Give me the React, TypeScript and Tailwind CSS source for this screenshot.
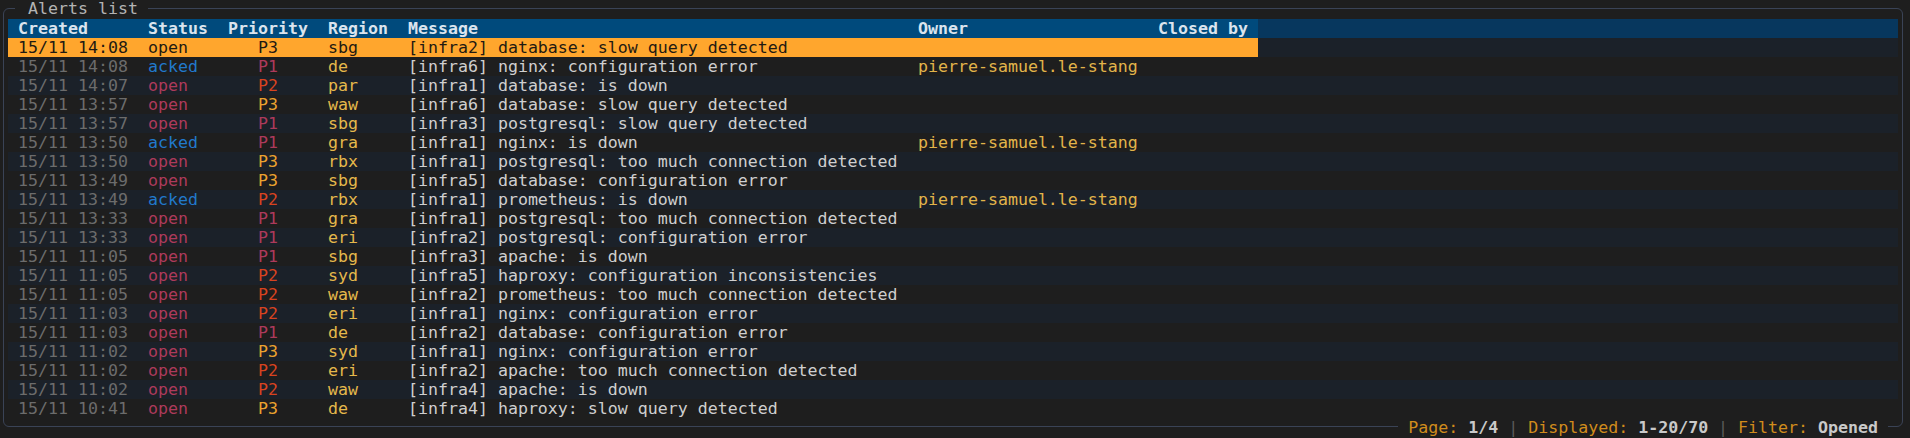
import React from "react";

type Row = {
  created: string;
  status: "open" | "acked";
  priority: "P1" | "P2" | "P3";
  region: string;
  message: string;
  owner?: string;
};

const rows: Row[] = [
  { created: "15/11 14:08", status: "open", priority: "P3", region: "sbg", message: "[infra2] database: slow query detected" },
  { created: "15/11 14:08", status: "acked", priority: "P1", region: "de", message: "[infra6] nginx: configuration error", owner: "pierre-samuel.le-stang" },
  { created: "15/11 14:07", status: "open", priority: "P2", region: "par", message: "[infra1] database: is down" },
  { created: "15/11 13:57", status: "open", priority: "P3", region: "waw", message: "[infra6] database: slow query detected" },
  { created: "15/11 13:57", status: "open", priority: "P1", region: "sbg", message: "[infra3] postgresql: slow query detected" },
  { created: "15/11 13:50", status: "acked", priority: "P1", region: "gra", message: "[infra1] nginx: is down", owner: "pierre-samuel.le-stang" },
  { created: "15/11 13:50", status: "open", priority: "P3", region: "rbx", message: "[infra1] postgresql: too much connection detected" },
  { created: "15/11 13:49", status: "open", priority: "P3", region: "sbg", message: "[infra5] database: configuration error" },
  { created: "15/11 13:49", status: "acked", priority: "P2", region: "rbx", message: "[infra1] prometheus: is down", owner: "pierre-samuel.le-stang" },
  { created: "15/11 13:33", status: "open", priority: "P1", region: "gra", message: "[infra1] postgresql: too much connection detected" },
  { created: "15/11 13:33", status: "open", priority: "P1", region: "eri", message: "[infra2] postgresql: configuration error" },
  { created: "15/11 11:05", status: "open", priority: "P1", region: "sbg", message: "[infra3] apache: is down" },
  { created: "15/11 11:05", status: "open", priority: "P2", region: "syd", message: "[infra5] haproxy: configuration inconsistencies" },
  { created: "15/11 11:05", status: "open", priority: "P2", region: "waw", message: "[infra2] prometheus: too much connection detected" },
  { created: "15/11 11:03", status: "open", priority: "P2", region: "eri", message: "[infra1] nginx: configuration error" },
  { created: "15/11 11:03", status: "open", priority: "P1", region: "de", message: "[infra2] database: configuration error" },
  { created: "15/11 11:02", status: "open", priority: "P3", region: "syd", message: "[infra1] nginx: configuration error" },
  { created: "15/11 11:02", status: "open", priority: "P2", region: "eri", message: "[infra2] apache: too much connection detected" },
  { created: "15/11 11:02", status: "open", priority: "P2", region: "waw", message: "[infra4] apache: is down" },
  { created: "15/11 10:41", status: "open", priority: "P3", region: "de", message: "[infra4] haproxy: slow query detected" },
];

const statusColor: Record<string, string> = {
  open: "text-[#ad3a5b]",
  acked: "text-[#2179cc]",
};

const prioColor: Record<string, string> = {
  P1: "text-[#ad3a5b]",
  P2: "text-[#d8431f]",
  P3: "text-[#eba22f]",
};

function DataRow({ row, index }: { row: Row; index: number }) {
  const selected = index === 0;
  const stripe = index % 2 === 0 ? "bg-[#1b2129]" : "bg-[#1e1e1e]";
  return (
    <div className={`flex h-[19px] w-[1890px] ${stripe}`}>
      <div className={`flex h-[19px] w-[1250px] ${selected ? "bg-[#ffa62d] text-[#1f1a12]" : ""}`}>
        <div className="w-[10px]" />
        <div className={`w-[130px] ${selected ? "" : "text-[#6c6c6c]"}`}>{row.created}</div>
        <div className={`w-[80px] ${selected ? "" : statusColor[row.status]}`}>{row.status}</div>
        <div className="w-[100px]">
          <div className={`w-[80px] text-center ${selected ? "" : prioColor[row.priority]}`}>{row.priority}</div>
        </div>
        <div className={`w-[80px] ${selected ? "" : "text-[#e5b84b]"}`}>{row.region}</div>
        <div className={`w-[510px] whitespace-pre ${selected ? "" : "text-[#cfcfcf]"}`}>{row.message}</div>
        <div className={`w-[240px] ${selected ? "" : "text-[#e2b44a]"}`}>{row.owner ?? ""}</div>
        <div className="w-[100px]" />
      </div>
      <div className="flex-1" />
    </div>
  );
}

export default function App() {
  return (
    <div className="w-[1910px] h-[438px] overflow-hidden bg-[#1e1e1e] pl-[3px] pt-[8px] font-['DejaVu_Sans_Mono',monospace] text-[16.6px] leading-[19px]">
      <div className="relative w-[1900px] h-[419px] rounded-[6px] border border-[#3a4356] pl-[4px] pt-[10px]">
        <div className="absolute left-[11px] top-[-10px] h-[19px] bg-[#1e1e1e] pl-[13px] pr-[10px] text-[#b3b3b3] whitespace-pre">
          Alerts list
        </div>

        <div className="flex h-[19px] w-[1890px] bg-[#07375e] font-bold text-[#dbe4ee]">
          <div className="flex h-[19px] w-[1250px] bg-[#004a7c]">
            <div className="w-[10px]" />
            <div className="w-[130px]">Created</div>
            <div className="w-[80px]">Status</div>
            <div className="w-[100px]">Priority</div>
            <div className="w-[80px]">Region</div>
            <div className="w-[510px]">Message</div>
            <div className="w-[240px]">Owner</div>
            <div className="w-[100px] whitespace-pre">Closed by</div>
          </div>
          <div className="flex-1" />
        </div>

        {rows.map((r, i) => (
          <DataRow key={i} row={r} index={i} />
        ))}

        <div className="absolute right-[14px] top-[409px] flex h-[19px] bg-[#1e1e1e] px-[10px] whitespace-pre">
          <span className="text-[#d08c1c]">Page: </span>
          <span className="font-bold text-[#c9c9c9]">1/4</span>
          <span className="text-[#5a5a5a]"> | </span>
          <span className="text-[#d08c1c]">Displayed: </span>
          <span className="font-bold text-[#c9c9c9]">1-20/70</span>
          <span className="text-[#5a5a5a]"> | </span>
          <span className="text-[#d08c1c]">Filter: </span>
          <span className="font-bold text-[#c9c9c9]">Opened</span>
        </div>
      </div>
    </div>
  );
}
